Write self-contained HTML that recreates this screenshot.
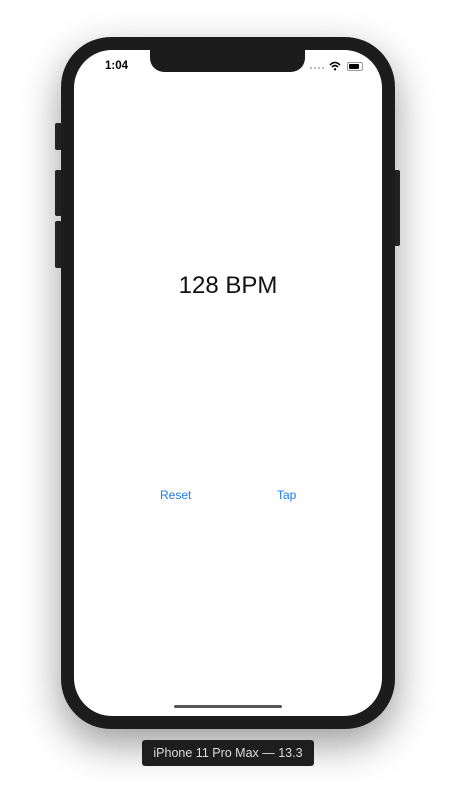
<!DOCTYPE html>
<html><head><style>
html,body{margin:0;padding:0;width:456px;height:800px;background:#fff;overflow:hidden;font-family:"Liberation Sans",sans-serif}
.phone{position:absolute;left:61px;top:37px;width:334px;height:692px;background:#1c1c1c;border-radius:50px;box-shadow:0 15px 40px rgba(0,0,0,.4)}
.screen{position:absolute;left:74px;top:50px;width:308px;height:666px;background:#fff;border-radius:38px;overflow:hidden}
.notch{position:absolute;left:76px;top:0;width:155px;height:22px;background:#1c1c1c;border-radius:0 0 14px 14px}
.btn{position:absolute;background:#2a2a2a;border-radius:2px}
.t{position:absolute;font-size:12px;color:#000}
.bpm{position:absolute;left:0;width:308px;top:222px;text-align:center;font-size:24px;color:#111}
.lnk{position:absolute;top:438px;font-size:12px;color:#1a7cf7}
.home{position:absolute;left:100px;top:655px;width:108px;height:3px;background:#555;border-radius:2px}
.lbl{position:absolute;left:142px;top:740px;width:172px;height:26px;background:#1e1e1e;border-radius:3px;color:#ddd;font-size:12.5px;text-align:center;line-height:26px}
</style></head><body>
<div class="btn" style="left:55px;top:123px;width:7px;height:27px"></div>
<div class="btn" style="left:55px;top:170px;width:7px;height:46px"></div>
<div class="btn" style="left:55px;top:221px;width:7px;height:47px"></div>
<div class="btn" style="left:394px;top:170px;width:6px;height:76px"></div>
<div class="phone"></div>
<div class="screen">
<div class="notch"></div>
<div class="t" style="left:31px;top:10px;font-weight:bold;font-size:11.5px">1:04</div>
<div style="position:absolute;left:236px;top:17px;width:14px;height:2px;border-top:2px dotted #bbb"></div>
<svg style="position:absolute;left:255px;top:11px" width="12" height="10" viewBox="0 0 12 10"><path d="M1 4 Q6 -1 11 4" stroke="#000" stroke-width="1.6" fill="none"/><path d="M3 6 Q6 3 9 6" stroke="#000" stroke-width="1.6" fill="none"/><circle cx="6" cy="8.3" r="1.2"/></svg>
<div style="position:absolute;left:273px;top:12px;width:14px;height:7px;border:1px solid #999;border-radius:2px"><div style="margin:1px;width:10px;height:5px;background:#000;border-radius:1px"></div></div>
<div class="bpm">128 BPM</div>
<div class="lnk" style="left:86px">Reset</div>
<div class="lnk" style="left:203px">Tap</div>
<div class="home"></div>
</div>
<div class="lbl">iPhone 11 Pro Max — 13.3</div>
</body></html>
